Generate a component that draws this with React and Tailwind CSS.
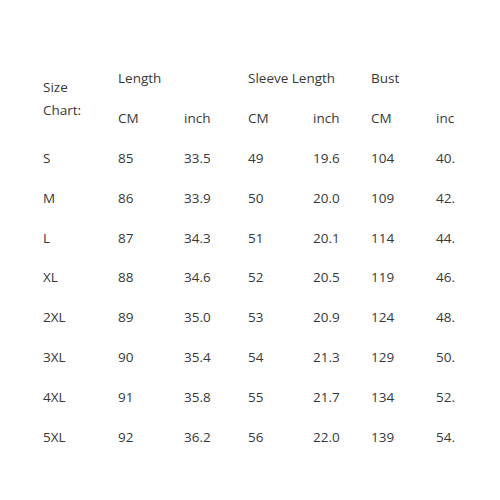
export default function App() {
  const rows = [
    ["S", "85", "33.5", "49", "19.6", "104", "40."],
    ["M", "86", "33.9", "50", "20.0", "109", "42."],
    ["L", "87", "34.3", "51", "20.1", "114", "44."],
    ["XL", "88", "34.6", "52", "20.5", "119", "46."],
    ["2XL", "89", "35.0", "53", "20.9", "124", "48."],
    ["3XL", "90", "35.4", "54", "21.3", "129", "50."],
    ["4XL", "91", "35.8", "55", "21.7", "134", "52."],
    ["5XL", "92", "36.2", "56", "22.0", "139", "54."],
  ];
  const cols = "grid grid-cols-[75px_66px_64px_65px_58px_65px_21px]";
  return (
    <div className="w-[500px] h-[500px] bg-white pt-[58px] pl-[43px] text-[13.5px] text-[#383838]" style={{ fontFamily: '"Open Sans", "Noto Sans", sans-serif' }}>
      <div className="w-[414px]">
        <div className={cols + " grid-rows-[40px_40px]"}>
          <div className="row-span-2 flex flex-col justify-center leading-[23px] pt-[2px]">
            <span>Size</span>
            <span>Chart:</span>
          </div>
          <div className="col-span-2 flex items-center">Length</div>
          <div className="col-span-2 flex items-center">Sleeve Length</div>
          <div className="col-span-2 flex items-center">Bust</div>
          <div className="flex items-center">CM</div>
          <div className="flex items-center">inch</div>
          <div className="flex items-center">CM</div>
          <div className="flex items-center">inch</div>
          <div className="flex items-center">CM</div>
          <div className="flex items-center whitespace-nowrap">inc</div>
        </div>
        {rows.map((r) => (
          <div key={r[0]} className={cols + " h-[39.9px] items-center"}>
            {r.map((c, i) => (
              <div key={i} className="whitespace-nowrap">{c}</div>
            ))}
          </div>
        ))}
      </div>
    </div>
  );
}
